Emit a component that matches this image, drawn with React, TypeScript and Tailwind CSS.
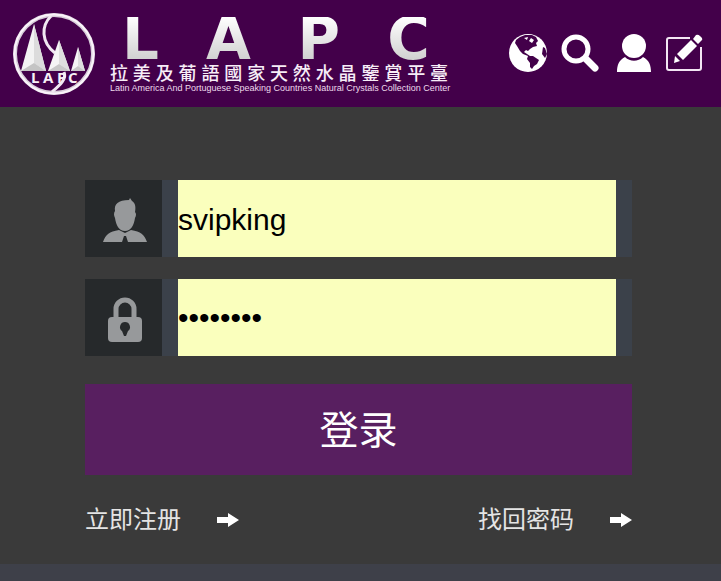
import React, { useState } from "react";

function Emblem() {
  return (
    <svg className="size-[83px] shrink-0" viewBox="0 0 83 83" fill="none" aria-label="LAPC">
      <circle cx="42" cy="41" r="39" stroke="#d9cfdb" strokeWidth="4" />
      <circle cx="42" cy="41" r="39.5" stroke="#fbf4fb" strokeWidth="2" />
      <path d="M39 3C29 13 29 29 43 40M52 59C55 66 48 72 40 79" stroke="#f1e8f2" strokeWidth="3" />
      <path d="M22 11L9 58H34Z" fill="#f3f3f3" />
      <path d="M22 11L22 50L34 58Z" fill="#dcdcdc" />
      <path d="M9 58L22 50L34 58Z" fill="#c4c4c4" />
      <path d="M47 27L36 58H58Z" fill="#f5f5f5" />
      <path d="M47 27L47 51L58 58Z" fill="#dedede" />
      <path d="M36 58L47 51L58 58Z" fill="#c8c8c8" />
      <path d="M66 34L59 58H73Z" fill="#f5f5f5" />
      <path d="M66 34L66 53L73 58Z" fill="#dedede" />
      <path d="M59 58L66 53L73 58Z" fill="#c8c8c8" />
      <g fontSize="15" fontWeight="700" fontFamily="Open Sans, sans-serif" fill="#f7f0f7">
        <text x="19" y="70">L</text>
        <text x="31" y="70">A</text>
        <text x="45" y="70">P</text>
        <text x="56" y="70">C</text>
      </g>
    </svg>
  );
}

function GlobeIcon() {
  return (
    <svg className="size-[38px]" viewBox="0 0 38 38">
      <circle cx="19" cy="19" r="19" fill="#fff" />
      <path
        d="M7 6L11 3L16 1L23 1L27 3L29 7L27 9L28 12L24 13L21 15L19 17L17 16L15 18L18 20L21 22L19 22L14 20L11 17L8 12L6 9Z"
        fill="#43004a"
      />
      <path d="M19 22L24 22L30 26L28 30L25 32L23 35L21 33L21 29L18 25Z" fill="#43004a" />
      <path d="M15 4L19 3L18 6ZM22 4L25 6L23 9L20 7Z" fill="#fff" />
      <path d="M34 13L36 14L38 20L36 24L33 20Z" fill="#43004a" />
    </svg>
  );
}

function SearchIcon() {
  return (
    <svg className="size-[38px]" viewBox="0 0 38 38" fill="none" stroke="#fff">
      <circle cx="15" cy="15" r="12" strokeWidth="5" />
      <path d="M25 25L34 34" strokeWidth="7" strokeLinecap="round" />
    </svg>
  );
}

function MemberIcon() {
  return (
    <svg className="size-[38px]" viewBox="-4 0 38 38" fill="#fff">
      <circle cx="17" cy="12" r="12" />
      <path d="M0 38C0 31 2 26 8 23C13 28 21 28 26 23C32 26 34 31 34 38Z" />
    </svg>
  );
}

function EditIcon() {
  return (
    <svg className="size-[38px]" viewBox="0 0 38 38">
      <path
        d="M25 4H4Q2 4 2 6V34Q2 36 4 36H34Q36 36 36 34V13"
        fill="none"
        stroke="#f3e6f4"
        strokeWidth="2"
      />
      <path d="M26 6L32 12L18 26L12 20Z" fill="#fff" />
      <path d="M10 22L15 27L9 29Z" fill="#fff" />
      <path d="M28 5L31 1Q33 0 35 2L37 4Q38 6 36 7L33 10Z" fill="#fff" />
    </svg>
  );
}

function UserIcon() {
  return (
    <svg className="size-[46px]" viewBox="0 0 46 46" fill="#97999b">
      <path d="M13 13C12 6 16 2 27 2L28 0L30 3C33 5 34 8 33 14Q35 16 33 20C32 27 29 33 23 33C17 33 14 27 13 20Q11 16 13 13Z" />
      <path d="M1 44C4 36 7 34 17 32L23 35L29 32C39 34 42 36 45 44H26L24 38H22L20 44Z" />
    </svg>
  );
}

function LockIcon() {
  return (
    <svg className="h-[46px] w-[34px]" viewBox="0 0 34 46">
      <path d="M8 21V12A9 9 0 0 1 26 12V21" fill="none" stroke="#97999b" strokeWidth="5" />
      <rect x="0" y="20" width="34" height="25" rx="4" fill="#97999b" />
      <path d="M17 25A5 5 0 0 1 20 34L18 39H16L14 34A5 5 0 0 1 17 25Z" fill="#26292b" />
    </svg>
  );
}

function Arrow() {
  return (
    <svg className="h-[14px] w-[22px]" viewBox="0 0 22 14" fill="#fff">
      <path d="M0 4H11V0L22 7L11 14V10H0Z" />
    </svg>
  );
}

const navItems = [
  { label: "Language", icon: <GlobeIcon /> },
  { label: "Search", icon: <SearchIcon /> },
  { label: "Member", icon: <MemberIcon /> },
  { label: "Register", icon: <EditIcon /> },
];

export default function App() {
  const [username, setUsername] = useState("svipking");
  const [password, setPassword] = useState("12345678");

  return (
    <div className="min-h-screen bg-[#3e4049] font-['Liberation_Sans','Noto_Sans_CJK_SC',sans-serif]">
      {/* Header */}
      <header className="flex h-[107px] items-start justify-between bg-[#43004a] pl-3">
        <a href="#" className="flex gap-[15px] pt-[13px]">
          <Emblem />
          <div className="w-[338px] pt-1">
            <div className="grid h-11 grid-cols-[61px_80px_66px_79px] justify-between bg-linear-to-b from-white to-[#cfcfcf] bg-clip-text text-center font-['DejaVu_Sans'] text-[58px] font-bold leading-[44px] text-transparent">
              <span>L</span>
              <span>A</span>
              <span>P</span>
              <span>C</span>
            </div>
            <p className="font-['Noto_Sans_CJK_TC',sans-serif] text-[18px] font-medium leading-[22px] text-[#f7edf7] [text-align-last:justify]">
              拉美及葡語國家天然水晶鑒賞平臺
            </p>
            <p className="whitespace-nowrap text-[9px] leading-[10px] text-[#eed9ec]">
              Latin America And Portuguese Speaking Countries Natural Crystals Collection Center
            </p>
          </div>
        </a>
        <nav className="flex items-center gap-[14px] pr-[18px] pt-[34px]">
          {navItems.map((item) => (
            <a key={item.label} href="#" aria-label={item.label}>
              {item.icon}
            </a>
          ))}
        </nav>
      </header>

      {/* Login form */}
      <main className="bg-[#3a3a3a] pb-[27px] pl-[85px] pr-[89px] pt-[73px]">
        <form onSubmit={(e) => e.preventDefault()}>
          <div className="flex h-[77px] bg-[#3b414a] pr-4">
            <label htmlFor="username" aria-label="用户名" className="mr-4 flex w-[77px] shrink-0 items-center justify-center bg-[#26292b] pl-0.5 pt-1">
              <UserIcon />
            </label>
            <input
              id="username"
              type="text"
              value={username}
              onChange={(e) => setUsername(e.target.value)}
              className="min-w-0 flex-1 bg-[#faffbd] pt-0.5 text-[30px] text-black outline-none"
            />
          </div>
          <div className="mt-[22px] flex h-[77px] bg-[#3b414a] pr-4">
            <label htmlFor="password" aria-label="密码" className="mr-4 flex w-[77px] shrink-0 items-center justify-center bg-[#26292b] pl-0.5 pt-1">
              <LockIcon />
            </label>
            <input
              id="password"
              type="password"
              value={password}
              onChange={(e) => setPassword(e.target.value)}
              className="min-w-0 flex-1 bg-[#faffbd] text-[30px] text-black outline-none"
            />
          </div>
          <button type="submit" className="mt-7 h-[91px] w-full bg-[#581f60] pt-1 text-[39px] text-white">
            登录
          </button>
        </form>

        <div className="mt-7 flex justify-between text-[24px] leading-[34px] text-[#e4e4e4]">
          <a href="#" className="flex items-center gap-9">
            立即注册
            <Arrow />
          </a>
          <a href="#" className="flex items-center gap-9">
            找回密码
            <Arrow />
          </a>
        </div>
      </main>
    </div>
  );
}
